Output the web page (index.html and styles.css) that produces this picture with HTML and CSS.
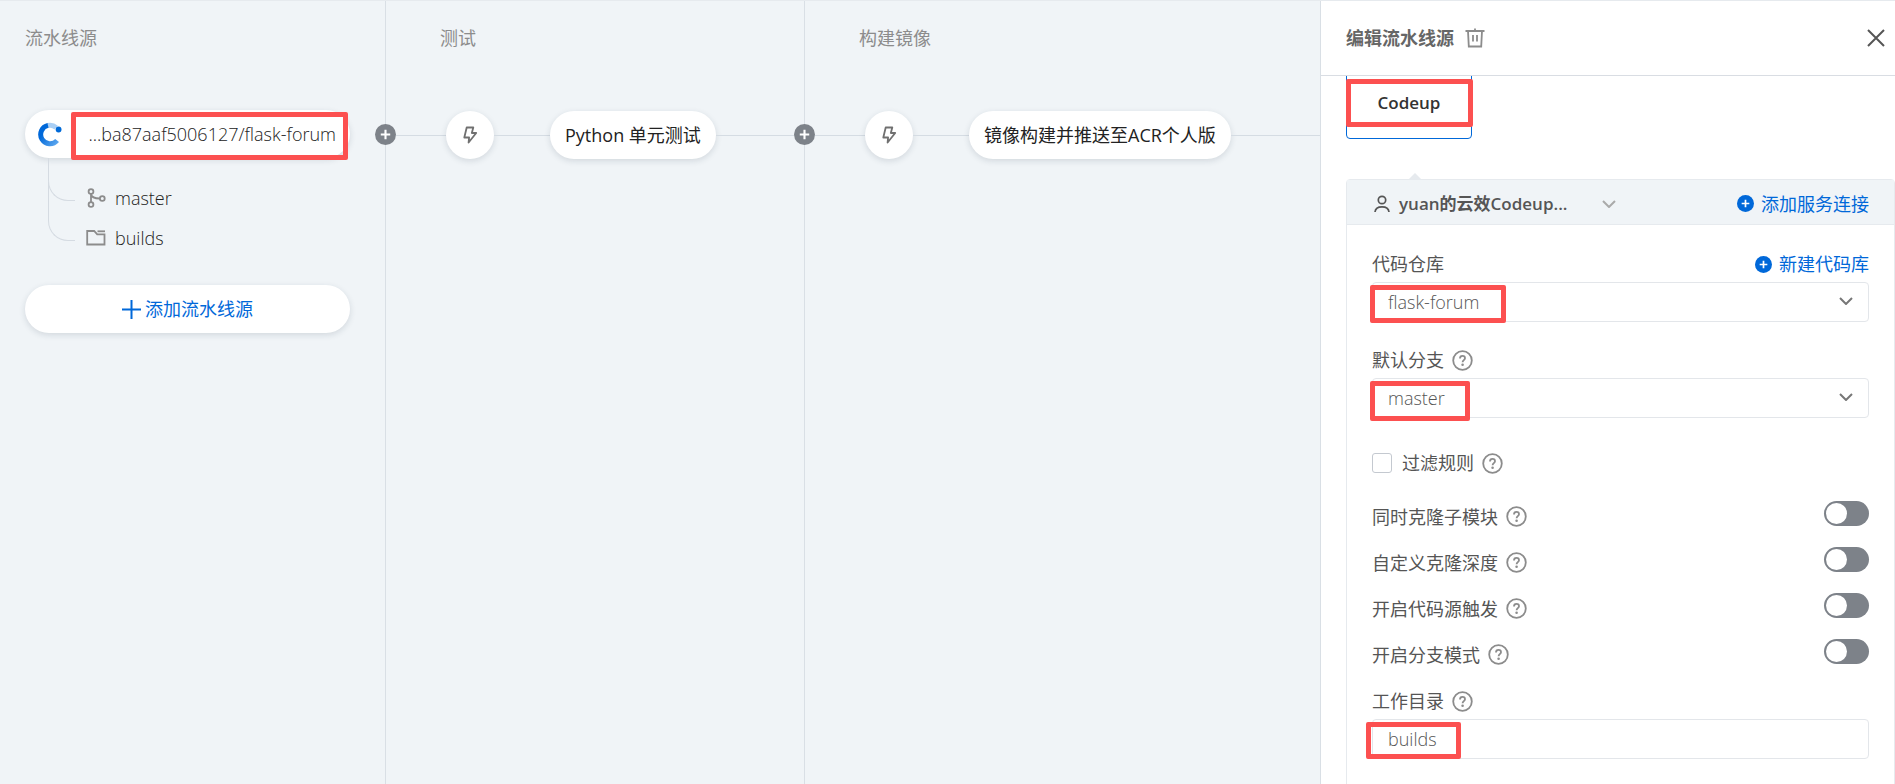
FILE: index.html
```html
<!DOCTYPE html>
<html lang="zh-CN">
<head>
    <meta charset="UTF-8">
    <meta name="viewport" content="width=device-width, initial-scale=1.0">
    <title>编辑流水线源</title>
    <link rel="stylesheet" href="styles.css">
</head>
<body>
    <!-- shared icons -->
    <svg class="sprite" aria-hidden="true">
        <symbol id="icon-help" viewBox="0 0 21 21">
            <circle cx="10.5" cy="10.5" r="9.3" fill="none" stroke="currentColor" stroke-width="1.8"/>
            <path d="M8 8.4c0-1.5 1-2.5 2.5-2.5S13 6.900 13 8.200c0 1.900-2.400 2-2.400 4" fill="none" stroke="currentColor" stroke-width="1.800"/>
            <circle cx="10.6" cy="14.700" r="1.300" fill="currentColor"/>
        </symbol>
        <symbol id="icon-plus-circle" viewBox="0 0 20 20">
            <circle cx="10" cy="10" r="10" fill="currentColor"/>
            <path d="M10 5.500v9M5.500 10h9" stroke="#fff" stroke-width="2"/>
        </symbol>
        <symbol id="icon-bolt" viewBox="0 0 16 20">
            <path d="M4.700 2.500h6.600L9.800 8h4.400L6.600 17.500l.5-5H2.300z" fill="none" stroke="currentColor" stroke-width="1.800" stroke-linejoin="round"/>
        </symbol>
        <symbol id="icon-chevron" viewBox="0 0 14 8">
            <path d="M1 1l6 6 6-6" fill="none" stroke="currentColor" stroke-width="2"/>
        </symbol>
    </svg>

    <div class="app">
        <main class="pipeline">
            <section class="stage stage-source">
                <h2>流水线源</h2>
                <button class="node source-node">
                    <svg class="logo" width="24" height="25" viewBox="0 0 24 25">
                        <defs>
                            <linearGradient id="arc" x1="0" y1="0" x2="1" y2="1">
                                <stop offset="0.3" stop-color="#0068d9"/>
                                <stop offset="1" stop-color="#5ba6ee"/>
                            </linearGradient>
                        </defs>
                        <path d="M9.600 3.500A9.300 9.300 0 0 1 18.200 5.600" fill="none" stroke="#a9cff5" stroke-width="5"/>
                        <path d="M19.100 18.500A9.300 9.300 0 1 1 10 3.400" fill="none" stroke="url(#arc)" stroke-width="5"/>
                        <circle cx="20.600" cy="7.500" r="2.900" fill="#006ad8"/>
                    </svg>
                    <span class="source-name">...ba87aaf5006127/flask-forum</span>
                    <span class="mark mark-source"></span>
                </button>
                <ul class="tree">
                    <li>
                        <svg width="20" height="20" viewBox="0 0 20 20" fill="none" stroke="currentColor" stroke-width="1.800">
                            <circle cx="5" cy="3.500" r="2.400"/><circle cx="5" cy="16.500" r="2.400"/><circle cx="16.300" cy="10.500" r="2.400"/>
                            <path d="M5 6v8M5 6c.5 3 3.500 4.500 8.800 4.500"/>
                        </svg>
                        master
                    </li>
                    <li>
                        <svg width="20" height="20" viewBox="0 0 20 20" fill="none" stroke="currentColor" stroke-width="1.800">
                            <path d="M11.500 3.300H19"/>
                            <path d="M1.200 16.500V3h7l3 3.400h7.300v10.100z"/>
                        </svg>
                        builds
                    </li>
                </ul>
                <button class="node add-source">
                    <svg width="19" height="19" viewBox="0 0 19 19"><path d="M9.500 0v19M0 9.500h19" stroke="currentColor" stroke-width="2"/></svg>
                    添加流水线源
                </button>
            </section>

            <section class="stage stage-test">
                <h2>测试</h2>
                <div class="flow">
                    <button class="add-stage" aria-label="添加阶段"><svg><use href="#icon-plus-circle"/></svg></button>
                    <span class="line line-start"></span>
                    <button class="node bolt" aria-label="触发"><svg width="16" height="20"><use href="#icon-bolt"/></svg></button>
                    <span class="line line-mid"></span>
                    <button class="node task">Python 单元测试</button>
                    <span class="line line-end"></span>
                </div>
            </section>

            <section class="stage stage-build">
                <h2>构建镜像</h2>
                <div class="flow">
                    <button class="add-stage" aria-label="添加阶段"><svg><use href="#icon-plus-circle"/></svg></button>
                    <span class="line line-start"></span>
                    <button class="node bolt" aria-label="触发"><svg width="16" height="20"><use href="#icon-bolt"/></svg></button>
                    <span class="line line-mid"></span>
                    <button class="node task">镜像构建并推送至ACR个人版</button>
                    <span class="line line-end"></span>
                </div>
            </section>
        </main>

        <aside class="panel">
            <header class="panel-header">
                <h1>编辑流水线源</h1>
                <button class="icon-btn trash" aria-label="删除">
                    <svg width="20" height="20" viewBox="0 0 20 20" fill="none" stroke="currentColor" stroke-width="1.800">
                        <path d="M.5 3h19M10 .5V3M3 3l.8 15.500h12.400L17 3M8 7v6.500M12 7v6.500"/>
                    </svg>
                </button>
                <button class="icon-btn close" aria-label="关闭">
                    <svg width="18" height="18" viewBox="0 0 18 18"><path d="M1 1l16 16M17 1L1 17" stroke="currentColor" stroke-width="2"/></svg>
                </button>
            </header>

            <div class="panel-body">
                <button class="source-type">
                    Codeup
                    <span class="mark mark-type"></span>
                </button>

                <form class="card">
                    <div class="card-header">
                        <button type="button" class="connection">
                            <svg width="16" height="18" viewBox="0 0 16 18" fill="none" stroke="currentColor" stroke-width="1.700">
                                <circle cx="8" cy="5" r="3.700"/>
                                <path d="M1 17c.4-3.500 3-5.200 7-5.200s6.600 1.700 7 5.200"/>
                            </svg>
                            <span>yuan的云效Codeup...</span>
                            <svg class="chevron" width="14" height="8"><use href="#icon-chevron"/></svg>
                        </button>
                        <a href="#" class="add-link"><svg width="17" height="17"><use href="#icon-plus-circle"/></svg>添加服务连接</a>
                    </div>

                    <div class="field">
                        <div class="field-label">
                            <label for="repo">代码仓库</label>
                            <a href="#" class="add-link"><svg width="17" height="17"><use href="#icon-plus-circle"/></svg>新建代码库</a>
                        </div>
                        <div class="control">
                            <select id="repo"><option>flask-forum</option></select>
                            <svg class="chevron" width="14" height="8"><use href="#icon-chevron"/></svg>
                            <span class="mark mark-repo"></span>
                        </div>
                    </div>

                    <div class="field">
                        <div class="field-label">
                            <label for="branch">默认分支</label>
                            <svg class="help"><use href="#icon-help"/></svg>
                        </div>
                        <div class="control">
                            <select id="branch"><option>master</option></select>
                            <svg class="chevron" width="14" height="8"><use href="#icon-chevron"/></svg>
                            <span class="mark mark-branch"></span>
                        </div>
                    </div>

                    <div class="filter">
                        <input type="checkbox" id="filter">
                        <label for="filter">过滤规则</label>
                        <svg class="help"><use href="#icon-help"/></svg>
                    </div>

                    <div class="switches">
                        <div class="switch-row">
                            <label for="submodule">同时克隆子模块</label>
                            <svg class="help"><use href="#icon-help"/></svg>
                            <input type="checkbox" role="switch" class="switch" id="submodule">
                        </div>
                        <div class="switch-row">
                            <label for="depth">自定义克隆深度</label>
                            <svg class="help"><use href="#icon-help"/></svg>
                            <input type="checkbox" role="switch" class="switch" id="depth">
                        </div>
                        <div class="switch-row">
                            <label for="trigger">开启代码源触发</label>
                            <svg class="help"><use href="#icon-help"/></svg>
                            <input type="checkbox" role="switch" class="switch" id="trigger">
                        </div>
                        <div class="switch-row">
                            <label for="branchmode">开启分支模式</label>
                            <svg class="help"><use href="#icon-help"/></svg>
                            <input type="checkbox" role="switch" class="switch" id="branchmode">
                        </div>
                    </div>

                    <div class="field">
                        <div class="field-label">
                            <label for="workdir">工作目录</label>
                            <svg class="help"><use href="#icon-help"/></svg>
                        </div>
                        <div class="control">
                            <input type="text" id="workdir" value="builds">
                            <span class="mark mark-workdir"></span>
                        </div>
                    </div>
                </form>
            </div>
        </aside>
    </div>
</body>
</html>
```

FILE: styles.css
```css
* {
    box-sizing: border-box;
}

body {
    margin: 0;
    font-family: "Open Sans", "Noto Sans CJK SC", sans-serif;
    font-size: 18px;
    line-height: 24px;
    color: #555;
    background-color: #f0f4f7;
}

button, input, select {
    font: inherit;
    color: inherit;
}

button {
    padding: 0;
    border: none;
    background: none;
    cursor: pointer;
}

svg {
    display: block;
    flex-shrink: 0;
}

h1, h2 {
    margin: 0;
    font-size: 18px;
}

.sprite {
    position: absolute;
    width: 0;
    height: 0;
}

.app {
    display: flex;
    height: 100vh;
    overflow: hidden;
    border-top: 1px solid #e6eaee;
}

/* Pipeline */
.pipeline {
    display: flex;
    flex: 1;
    min-width: 0;
}

.stage {
    padding-top: 25px;
    border-right: 1px solid #d9dfe5;
}

.stage h2 {
    font-weight: 400;
    color: #8c8c8c;
    padding-left: 54px;
}

.stage-source {
    flex: 0 0 386px;
    padding-left: 25px;
    padding-right: 35px;
}

.stage-source h2 {
    padding-left: 0;
}

.stage-test {
    flex: 0 0 419px;
}

.stage-build {
    flex: 1;
    border-right: none;
}

.node {
    height: 48px;
    border-radius: 24px;
    background-color: #fff;
    color: #222;
    box-shadow: 0 2px 6px rgba(30, 50, 70, 0.14);
    white-space: nowrap;
}

.source-node {
    position: relative;
    display: flex;
    align-items: center;
    justify-content: space-between;
    width: 100%;
    margin-top: 60px;
    padding: 0 14px 0 13px;
}

.source-name {
    font-weight: 300;
}

.tree {
    margin: 0 0 0 23px;
    padding: 0;
    list-style: none;
    font-weight: 300;
    color: #222;
}

.tree li {
    position: relative;
    display: flex;
    align-items: center;
    gap: 9px;
    height: 40px;
    padding-left: 38px;
}

.tree li:first-child {
    margin-top: 20px;
}

.tree li::before {
    content: "";
    position: absolute;
    left: 0;
    bottom: 17px;
    width: 26px;
    height: 42px;
    border-left: 1px solid #d5dbe2;
    border-bottom: 1px solid #d5dbe2;
    border-bottom-left-radius: 20px;
}

.tree li:last-child::before {
    height: 58px;
}

.tree svg {
    color: #8c8c8c;
}

.add-source {
    display: flex;
    align-items: center;
    justify-content: center;
    gap: 4px;
    width: 100%;
    margin-top: 27px;
    color: #0068d9;
}

.flow {
    display: flex;
    align-items: center;
    margin-top: 61px;
}

.add-stage {
    width: 21px;
    height: 21px;
    margin: 0 0 2px -11px;
    color: #7d8289;
    z-index: 1;
}

.add-stage svg {
    width: 21px;
    height: 21px;
}

.line {
    height: 1px;
    background-color: #d5dce3;
}

.line-start {
    width: 50px;
}

.line-mid {
    width: 56px;
}

.line-end {
    flex: 1;
}

.bolt {
    display: flex;
    align-items: center;
    justify-content: center;
    width: 48px;
    color: #707070;
}

.task {
    padding: 0 15px;
}

/* Side panel */
.panel {
    display: flex;
    flex-direction: column;
    flex: 0 0 575px;
    border-left: 1px solid #d9dfe5;
    background-color: #fff;
}

.panel-header {
    display: flex;
    align-items: center;
    flex-shrink: 0;
    height: 75px;
    padding: 0 10px 0 25px;
    border-bottom: 1px solid #d9dde3;
}

.panel-header h1 {
    color: #666;
}

.icon-btn {
    display: flex;
    color: #8c8c8c;
}

.trash {
    margin-left: 11px;
}

.close {
    margin-left: auto;
    color: #555;
}

.panel-body {
    flex: 1;
    overflow: hidden;
    padding-left: 25px;
}

.source-type {
    position: relative;
    display: block;
    width: 126px;
    height: 84px;
    margin-top: -21px;
    padding-top: 12px;
    border: 1px solid #0068d9;
    border-radius: 4px;
    font-size: 17px;
    font-weight: 600;
    color: #333;
}

.card {
    position: relative;
    height: 800px;
    margin-top: 40px;
    border: 1px solid #e6eaee;
    border-radius: 4px;
}

.card::before {
    content: "";
    position: absolute;
    left: 62px;
    top: -7px;
    border: 6px solid transparent;
    border-top: none;
    border-bottom-color: #e6eaee;
}

.card-header {
    display: flex;
    align-items: center;
    justify-content: space-between;
    height: 45px;
    padding: 3px 25px 0 27px;
    border-bottom: 1px solid #e6eaee;
    background-color: #f0f4f7;
}

.connection {
    display: flex;
    align-items: center;
    gap: 9px;
    font-size: 17px;
    font-weight: 600;
}

.connection .chevron {
    margin-left: 26px;
    color: #aaa;
}

.add-link {
    display: flex;
    align-items: center;
    gap: 7px;
    color: #0068d9;
    text-decoration: none;
}

.field {
    padding: 0 25px;
}

.card-header + .field {
    margin-top: 27px;
}

.field + .field {
    margin-top: 26px;
}

.field-label {
    display: flex;
    align-items: center;
    height: 24px;
    margin-bottom: 6px;
}

.field-label .add-link {
    margin-left: auto;
}

.help {
    width: 21px;
    height: 21px;
    margin-left: 8px;
    color: #8c8c8c;
}

.control {
    position: relative;
}

.control select,
.control input {
    display: block;
    width: 100%;
    height: 40px;
    padding: 0 15px;
    border: 1px solid #e3e6ea;
    border-radius: 4px;
    background-color: #fff;
    font-weight: 300;
    appearance: none;
}

.control .chevron {
    position: absolute;
    right: 16px;
    top: 15px;
    color: #777;
    pointer-events: none;
}

.filter {
    display: flex;
    align-items: center;
    height: 24px;
    margin: 33px 25px 0;
}

.filter input {
    width: 20px;
    height: 20px;
    margin: 0 10px 0 0;
    border: 1px solid #c4c9d0;
    border-radius: 3px;
    appearance: none;
}

.switches {
    margin: 26px 0 22px;
    padding: 0 25px;
}

.switch-row {
    display: flex;
    align-items: flex-end;
    height: 28px;
    margin-bottom: 18px;
}

.switch-row .help {
    margin-bottom: 2px;
}

.switch {
    align-self: flex-start;
    width: 45px;
    height: 25px;
    margin: 0 0 0 auto;
    padding: 2px;
    border-radius: 13px;
    background-color: #7d8289;
    appearance: none;
}

.switch::before {
    content: "";
    display: block;
    width: 21px;
    height: 21px;
    border-radius: 50%;
    background-color: #fff;
}

.switch:checked {
    background-color: #0068d9;
}

.switch:checked::before {
    margin-left: auto;
}

/* Red highlight frames */
.mark {
    position: absolute;
    border: 5px solid #fc5050;
    border-radius: 2px;
    pointer-events: none;
}

.mark-source {
    inset: 2px 2px -2px 46px;
}

.mark-type {
    inset: 23px -2px 11px -1px;
}

.mark-repo {
    left: -2px;
    top: 3px;
    width: 136px;
    height: 38px;
}

.mark-branch {
    left: -2px;
    top: 3px;
    width: 100px;
    height: 40px;
}

.mark-workdir {
    left: -6px;
    top: 3px;
    width: 95px;
    height: 37px;
}
```
